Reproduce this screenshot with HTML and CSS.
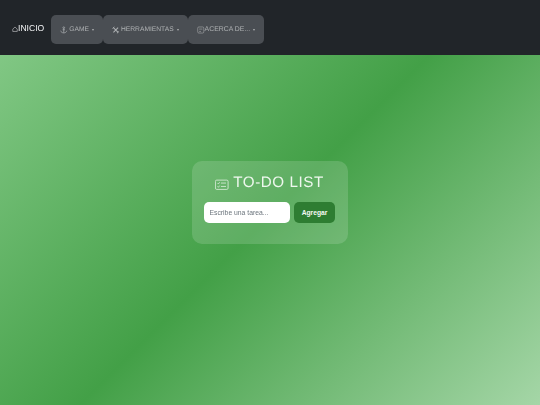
FILE: index.html
```html
<!DOCTYPE html>
<html lang="es">
<head>
<meta charset="utf-8">
<title>To-Do List</title>
<link rel="stylesheet" href="styles.css">
</head>
<body>
<nav class="navbar">
  <a class="brand" href="#">
    <svg class="icon brand-icon" viewBox="0 0 16 16" fill="none" stroke="currentColor" stroke-width="1.300"><path d="M2 14.500V8.500L8 2.500l6 6v6z"/></svg>INICIO
  </a>
  <ul class="menu">
    <li class="menu-item">
      <svg class="icon" viewBox="0 0 16 16" fill="none" stroke="currentColor" stroke-width="1.500"><circle cx="8" cy="3" r="1.800"/><path d="M8 4.800V14M5.500 7.500h5M1.500 9.500C2 12.500 5 14.200 8 14.200s6-1.700 6.500-4.700"/></svg>
      <span>GAME</span><i class="caret"></i>
    </li>
    <li class="menu-item">
      <svg class="icon" viewBox="0 0 16 16" fill="none" stroke="currentColor" stroke-width="2.200"><path d="M3 3l10 10M13 3L3 13"/><path d="M1 5l4-4M10.500 15l4.500-4" stroke-width="1.800"/></svg>
      <span>HERRAMIENTAS</span><i class="caret"></i>
    </li>
    <li class="menu-item tight">
      <svg class="icon" viewBox="0 0 16 16" fill="none" stroke="currentColor" stroke-width="1.200"><rect x="1.500" y="1.500" width="13" height="13" rx="2.500"/><path d="M4.500 6h7M4.500 11h4"/></svg>
      <span>ACERCA DE...</span><i class="caret"></i>
    </li>
  </ul>
</nav>
<main class="stage">
  <section class="card">
    <h1 class="title">
      <svg class="title-icon" viewBox="0 0 16 16" fill="none" stroke="currentColor" stroke-width="1"><rect x="0.500" y="2.500" width="15" height="11" rx="1.500"/><path d="M7 6h6M7 10h6"/><path d="M3 6l1 1 1.500-2M3 10l1 1 1.500-2"/></svg>
      <span>TO-DO LIST</span>
    </h1>
    <form class="task-form">
      <input class="task-input" type="text" placeholder="Escribe una tarea...">
      <button class="task-btn" type="button">Agregar</button>
    </form>
  </section>
</main>
</body>
</html>
```
FILE: styles.css
```css
* { box-sizing: border-box; }
html, body { height: 100%; }
body {
  margin: 0;
  display: flex;
  flex-direction: column;
  font-family: "Liberation Sans", Arial, sans-serif;
  overflow: hidden;
  text-rendering: geometricPrecision;
}
.navbar {
  flex: 0 0 55px;
  background: #212529;
  display: flex;
  align-items: center;
  padding: 4px 0 0 12px;
  gap: 7px;
}
.brand {
  display: flex;
  align-items: center;
  color: #f2f3f4;
  font-size: 8.600px;
  text-decoration: none;
  padding-bottom: 3px;
  filter: blur(0.3px);
}
.icon { width: 7.500px; height: 8px; flex: none; }
.brand-icon { width: 6px; height: 8px; margin-top: 1px; }
.menu {
  display: flex;
  list-style: none;
  margin: 0;
  padding: 0;
  filter: blur(0.3px);
}
.menu-item {
  height: 29px;
  background: #4a4e53;
  border-radius: 5px;
  color: #aeb1b3;
  font-size: 6.700px;
  display: flex;
  align-items: center;
  gap: 1.500px;
  padding: 0 9px;
}
.menu-item.tight { gap: 0; font-size: 6.900px; padding-left: 9.500px; }
.caret {
  width: 0;
  height: 0;
  margin-left: 1.500px;
  border-top: 2px solid currentColor;
  border-left: 1.750px solid transparent;
  border-right: 1.750px solid transparent;
}
.tight .caret { margin-left: 2.500px; }
.stage {
  flex: 1;
  display: flex;
  justify-content: center;
  align-items: center;
  padding-bottom: 55px;
  background: linear-gradient(135deg, #81c784, #43a047 48.300%, #a5d6a7);
}
.card {
  width: 156px;
  height: 83px;
  border-radius: 10px;
  background: rgba(255, 255, 255, 0.15);
  padding: 12px 13px 0 12px;
  filter: blur(0.3px);
}
.title {
  margin: 0 0 9px;
  color: #eef7ee;
  font-size: 15.200px;
  font-weight: 400;
  letter-spacing: 0.550px;
  display: flex;
  align-items: center;
  justify-content: center;
  gap: 4.500px;
  line-height: 20px;
}
.title-icon { width: 13.500px; height: 13.500px; margin-top: 3px; opacity: 0.85; }
.task-form { display: flex; gap: 4px; }
.task-input {
  width: 86px;
  height: 20.500px;
  border: 0;
  border-radius: 5px;
  background: #fff;
  padding: 0 5.500px;
  font: 6.800px "Liberation Sans", Arial, sans-serif;
}
.task-input::placeholder { color: #6c757d; opacity: 1; }
.task-btn {
  width: 41.500px;
  height: 20.500px;
  border: 0;
  border-radius: 5px;
  padding: 0;
  background: #2e7d32;
  color: #f5f9f5;
  font: 700 6.700px "Liberation Sans", Arial, sans-serif;
}
```
